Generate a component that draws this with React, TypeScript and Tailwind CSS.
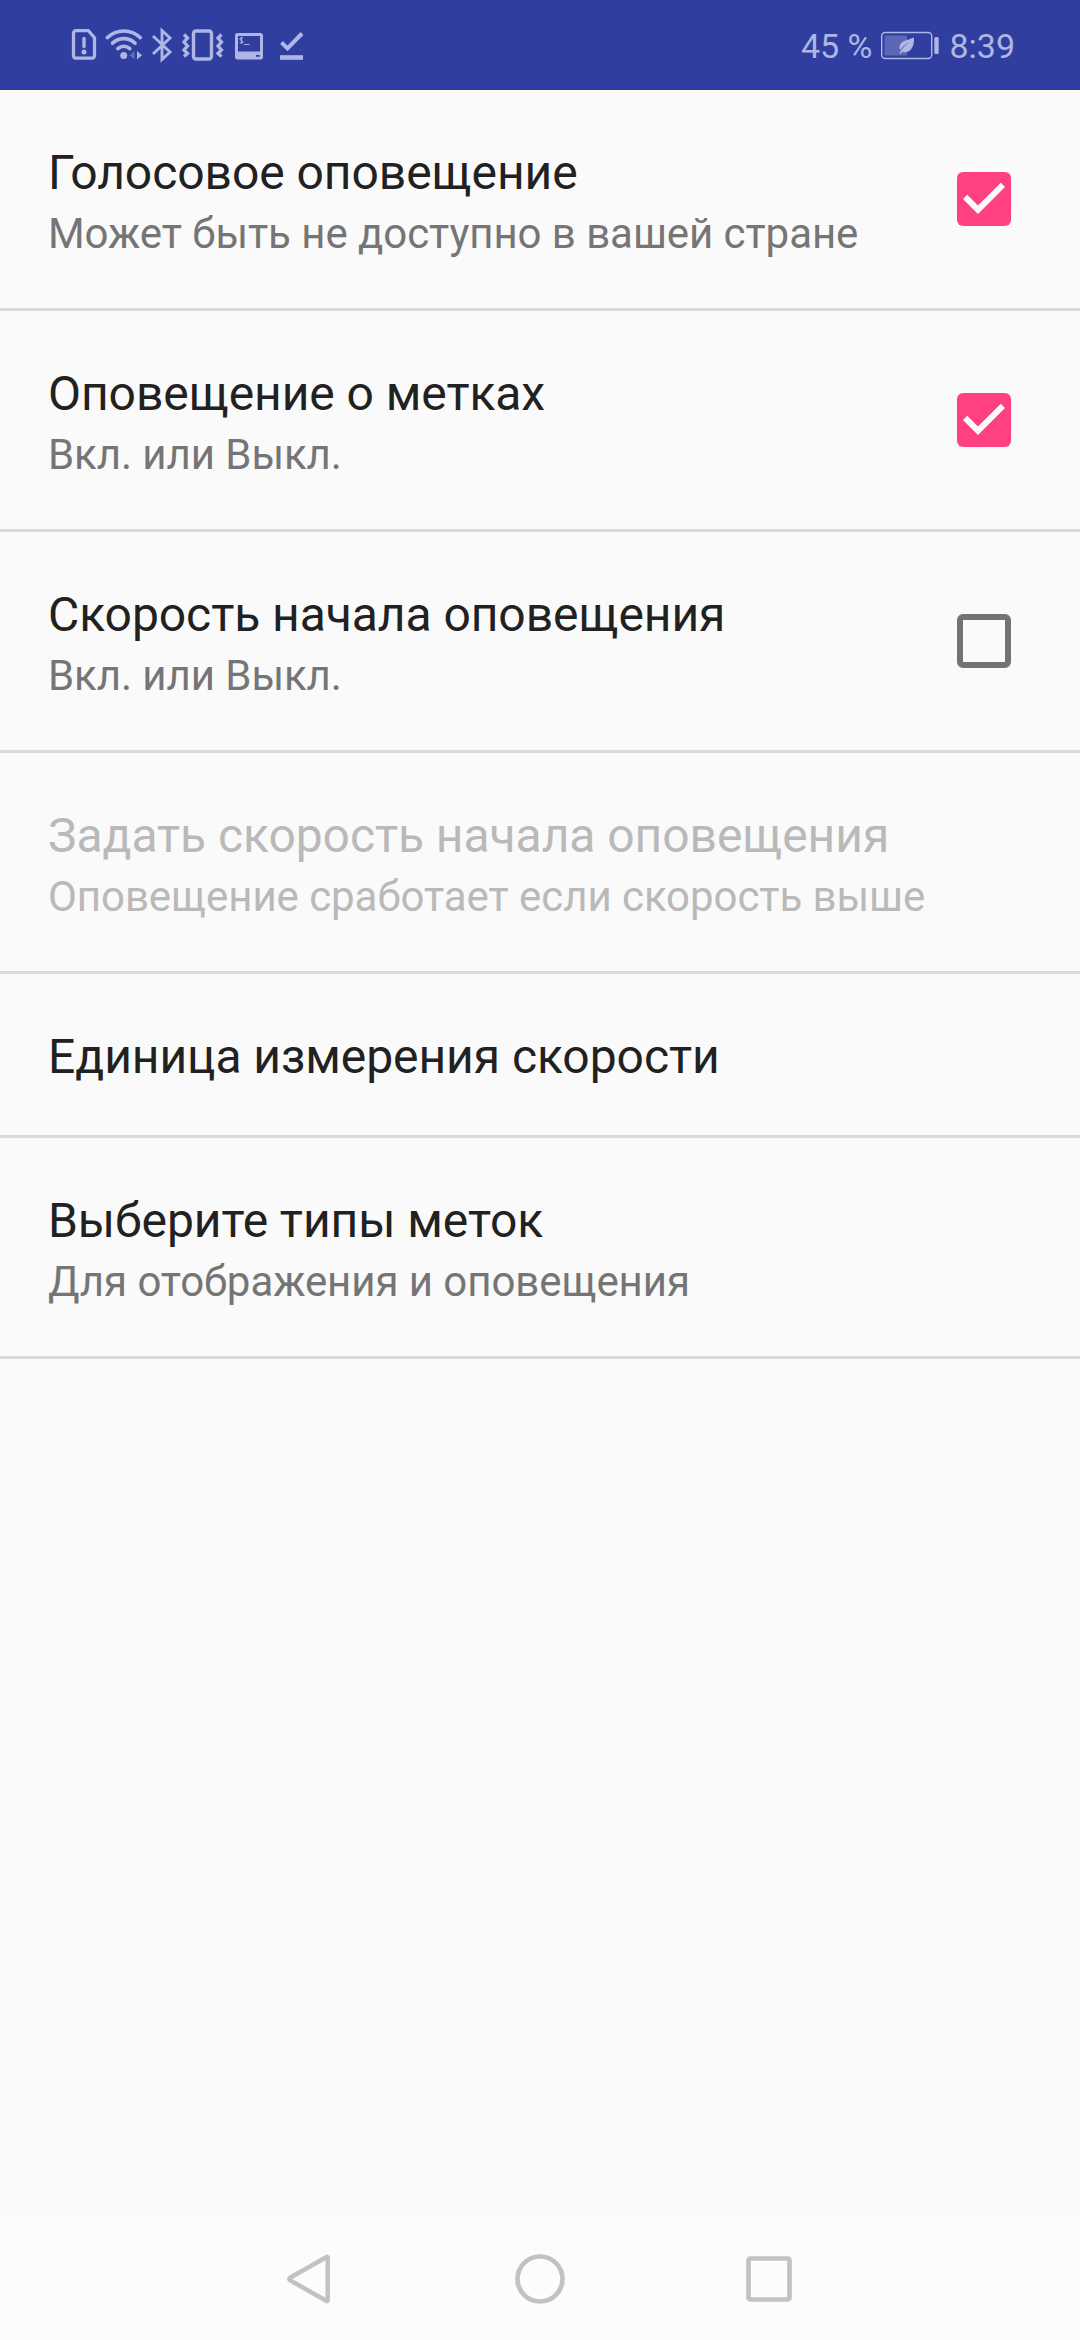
import React from 'react';

interface Preference {
  title: string;
  summary?: string;
  checked?: boolean;
  disabled?: boolean;
}

const preferences: Preference[] = [
  { title: 'Голосовое оповещение', summary: 'Может быть не доступно в вашей стране', checked: true },
  { title: 'Оповещение о метках', summary: 'Вкл. или Выкл.', checked: true },
  { title: 'Скорость начала оповещения', summary: 'Вкл. или Выкл.', checked: false },
  { title: 'Задать скорость начала оповещения', summary: 'Оповещение сработает если скорость выше', disabled: true },
  { title: 'Единица измерения скорости' },
  { title: 'Выберите типы меток', summary: 'Для отображения и оповещения' },
];

const StatusIcons: React.FC = () => (
  <svg width="240" height="36" viewBox="70 27 240 36" fill="none" stroke="currentColor">
    {/* sim card warning */}
    <path d="M76 30.7h12.5l6 7v18a2.5 2.5 0 0 1-2.5 2.5H76a2.5 2.5 0 0 1-2.5-2.5V33.2a2.5 2.5 0 0 1 2.5-2.5z" strokeWidth="3.3" strokeLinejoin="round" />
    <path d="M84 38.5v8" strokeWidth="3.4" strokeLinecap="round" />
    <circle cx="84" cy="52" r="2.5" fill="currentColor" stroke="none" />
    {/* wifi */}
    <g strokeWidth="3.6" strokeLinecap="round">
      <path d="M107.3 37.6c9.5-8.8 23.500-8.800 33 0" />
      <path d="M112.500 43.200c6.700-6.100 16-6.100 22.600 0" />
      <path d="M117.800 48.700c3.700-3.200 8.400-3.200 12 0" />
    </g>
    <circle cx="123.700" cy="55.500" r="3.500" fill="currentColor" stroke="none" />
    <path d="M134.500 51v8.500l-5-4.200z" fill="currentColor" stroke="none" opacity="0.4" />
    <path d="M137 51v8.500l5-4.200z" fill="currentColor" stroke="none" />
    {/* bluetooth */}
    <path d="M153 36l17 16-8 7.500V30.500l8 7.500-17 16" strokeWidth="2.900" />
    {/* vibrate */}
    <rect x="193.500" y="31" width="18" height="28" rx="2.500" strokeWidth="3.400" />
    <path d="M184 34.500l3.500 3.500-3.500 4 3.500 4-3.500 4 3.500 3.500-3.500 3" strokeWidth="3.300" />
    <path d="M221.500 34.500l-3.500 3.500 3.500 4-3.500 4 3.500 4-3.500 3.500 3.500 3" strokeWidth="3.300" />
    {/* terminal */}
    <path fillRule="evenodd" d="M237.500 33h23a2.500 2.500 0 0 1 2.500 2.500v21.500a2.500 2.500 0 0 1-2.500 2.500h-23a2.500 2.500 0 0 1-2.500-2.500V35.500a2.500 2.500 0 0 1 2.500-2.500zM238 36v15.500h22V36zM256 55v1.700h3.700V55z" fill="currentColor" stroke="none" />
    <path d="M243 38.300c-1-1-3.200-.7-3.200.7 0 2 3.200 1.200 3.200 3 0 1.500-2.400 1.500-3.400.5M241.400 36.800v7M244 44.500h5.500" strokeWidth="1" />
    {/* download done */}
    <path d="M281.500 42.500l6 6 14.500-15" strokeWidth="4" />
    <path d="M280 57.500h23" strokeWidth="4.600" />
  </svg>
);

const BatteryIcon: React.FC = () => (
  <svg width="60" height="30" viewBox="880 30 60 30" fill="none" stroke="currentColor">
    <rect x="881.700" y="32.500" width="50" height="26" rx="3.500" strokeWidth="1.400" />
    <rect x="884.500" y="35.500" width="22.500" height="20" rx="1" fill="currentColor" stroke="none" opacity="0.35" />
    <rect x="934.300" y="37" width="4.400" height="17" rx="1.500" fill="currentColor" stroke="none" />
    <path d="M914 37.500c-6 2.500-14 3-14.500 9.500 0 1.500.3 2.500.8 3.200 2-3.500 5-5.700 8.700-7.700-4.500 3.200-7.500 6.500-9.500 11l1.500.3 1.200-2c7.300 2 12.300-3.800 11.800-14.300z" fill="currentColor" stroke="none" />
  </svg>
);

const StatusBar: React.FC = () => (
  <div className="flex h-[90px] items-center justify-between bg-[#303f9f] pl-[70px] pr-[65px] text-[#afb5e4]">
    <StatusIcons />
    <div className="flex items-center text-[34px] leading-[40px]">
      <span className="pt-[2px]">45 %</span>
      <span className="ml-[8px] mr-[9px]"><BatteryIcon /></span>
      <span className="pt-[2px]">8:39</span>
    </div>
  </div>
);

const Checkbox: React.FC<{ checked: boolean }> = ({ checked }) => (
  <div
    role="checkbox"
    aria-checked={checked}
    className={`h-[54px] w-[54px] shrink-0 rounded-[6px] ${checked ? 'bg-[#ff4081]' : 'border-[6px] border-[#737373]'}`}
  >
    {checked && (
      <svg viewBox="3 3 18 18" className="h-full w-full">
        <path d="M10 17l-5-5 1.410-1.410L10 14.170l7.590-7.590L19 8z" fill="#fafafa" />
      </svg>
    )}
  </div>
);

const PreferenceRow: React.FC<{ item: Preference }> = ({ item }) => (
  <div className={`flex items-center justify-between border-b-[3px] border-[#dadada] pl-[48px] pr-[69px] ${item.summary ? 'h-[221px]' : 'h-[164px]'}`}>
    <div className={`whitespace-nowrap tracking-[-0.06px] ${item.summary ? 'pt-[7px]' : 'pt-[5px]'}`}>
      <div className={`text-[48px] leading-[62px] ${item.disabled ? 'text-[#b9b9b9]' : 'text-[#212121]'}`}>
        {item.title}
      </div>
      {item.summary && (
        <div className={`mt-px text-[42px] leading-[58px] ${item.disabled ? 'text-[#b9b9b9]' : 'text-[#757575]'}`}>
          {item.summary}
        </div>
      )}
    </div>
    {item.checked !== undefined && <Checkbox checked={item.checked} />}
  </div>
);

const NavigationBar: React.FC = () => (
  <div className="flex h-[122px] items-center bg-[#fcfcfc] pl-[285px] text-[#c2c2c2]">
    <svg width="48" height="54" viewBox="0 0 48 54" fill="none" stroke="currentColor" strokeWidth="4.500" strokeLinejoin="round">
      <path d="M41.200 5.200Q42.700 4.200 42.700 6V48Q42.700 49.800 41.200 48.800L5 28.300Q3.500 27 5 25.700z" />
    </svg>
    <svg width="50" height="50" className="ml-[182px]" fill="none" stroke="currentColor" strokeWidth="4.700">
      <circle cx="25" cy="25" r="22.500" />
    </svg>
    <svg width="46" height="46" className="ml-[181px]" fill="none" stroke="currentColor" strokeWidth="4.700">
      <rect x="2.500" y="2.500" width="41" height="41" rx="2" />
    </svg>
  </div>
);

const App: React.FC = () => {
  return (
    <div className="flex h-[2340px] w-[1080px] flex-col overflow-hidden bg-[#fafafa] font-['Roboto',sans-serif]">
      <StatusBar />
      <div className="flex-1">
        {preferences.map((item) => (
          <PreferenceRow key={item.title} item={item} />
        ))}
      </div>
      <NavigationBar />
    </div>
  );
};

export default App;
